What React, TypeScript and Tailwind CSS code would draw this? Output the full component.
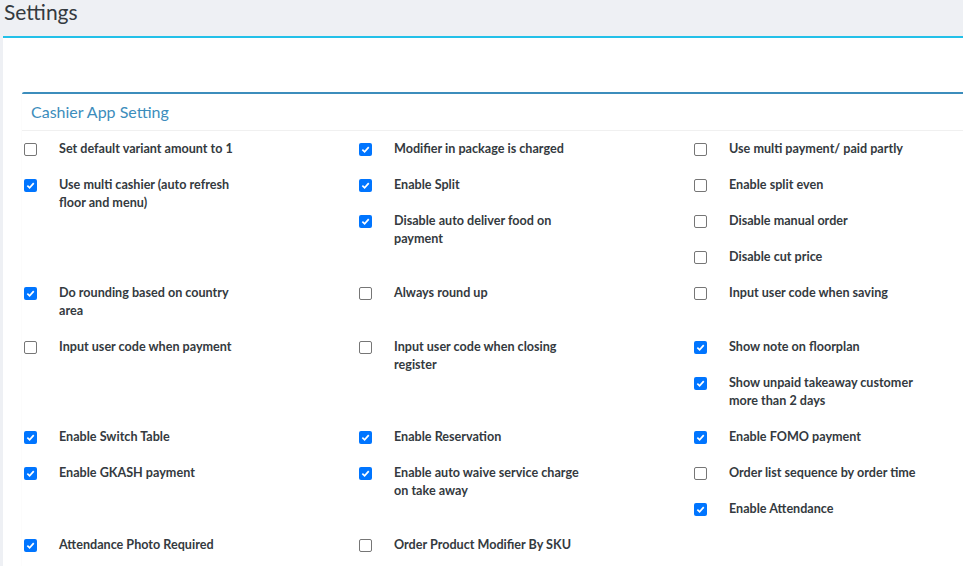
import React from "react";

type Item = [string, boolean];
const rows: Item[][][] = [
  [[["Set default variant amount to 1", false]], [["Modifier in package is charged", true]], [["Use multi payment/ paid partly", false]]],
  [[["Use multi cashier (auto refresh floor and menu)", true]], [["Enable Split", true], ["Disable auto deliver food on payment", true]], [["Enable split even", false], ["Disable manual order", false], ["Disable cut price", false]]],
  [[["Do rounding based on country area", true]], [["Always round up", false]], [["Input user code when saving", false]]],
  [[["Input user code when payment", false]], [["Input user code when closing register", false]], [["Show note on floorplan", true], ["Show unpaid takeaway customer more than 2 days", true]]],
  [[["Enable Switch Table", true]], [["Enable Reservation", true]], [["Enable FOMO payment", true]]],
  [[["Enable GKASH payment", true]], [["Enable auto waive service charge on take away", true]], [["Order list sequence by order time", false], ["Enable Attendance", true]]],
  [[["Attendance Photo Required", true]], [["Order Product Modifier By SKU", false]], []],
];

function Box({ checked }: { checked: boolean }) {
  return checked ? (
    <span className="w-[13px] h-[13px] rounded-[2px] bg-[#0075ff] flex items-center justify-center shrink-0 mt-[3px]">
      <svg width="9" height="9" viewBox="0 0 10 10"><path d="M1.5 5.2 L4 7.6 L8.6 2.3" stroke="white" strokeWidth="1.9" fill="none" /></svg>
    </span>
  ) : (
    <span className="w-[13px] h-[13px] rounded-[2px] border border-[#767676] bg-white shrink-0 mt-[3px]" />
  );
}

export default function App() {
  return (
    <div className="w-[963px] h-[566px] overflow-hidden bg-[#eef0f4]" style={{ fontFamily: "'Source Sans Pro', Lato, 'Noto Sans', sans-serif" }}>
      <div className="h-[36px] pl-[4px] text-[21px] leading-[24px] text-[#343a40]">Settings</div>
      <div className="ml-[3px] w-[1000px] h-[540px] bg-white border-t-2 border-[#22c0e8] pt-[54px] pl-[19px]">
        <div className="w-[980px] border-t-2 border-[#3c8dbc] rounded-t-[2px] shadow-[0_1px_1px_rgba(0,0,0,0.15)] pb-[0px]">
          <div className="h-[37px] pl-[9px] flex items-center text-[16px] text-[#3c8dbc] border-b border-[#f0f0f0]">Cashier App Setting</div>
          <div className="pt-[9px] pl-[2px]">
            {rows.map((row, i) => (
              <div key={i} className="grid grid-cols-[335px_335px_335px]">
                {row.map((cell, j) => (
                  <div key={j} className="flex flex-col">
                    {cell.map(([label, checked], k) => (
                      <div key={k} className="pb-[18px] flex items-start">
                        <Box checked={checked} />
                        <span className="ml-[22px] w-[195px] text-[12.6px] leading-[18px] font-bold text-[#343a40]">{label}</span>
                      </div>
                    ))}
                  </div>
                ))}
              </div>
            ))}
          </div>
        </div>
      </div>
    </div>
  );
}
